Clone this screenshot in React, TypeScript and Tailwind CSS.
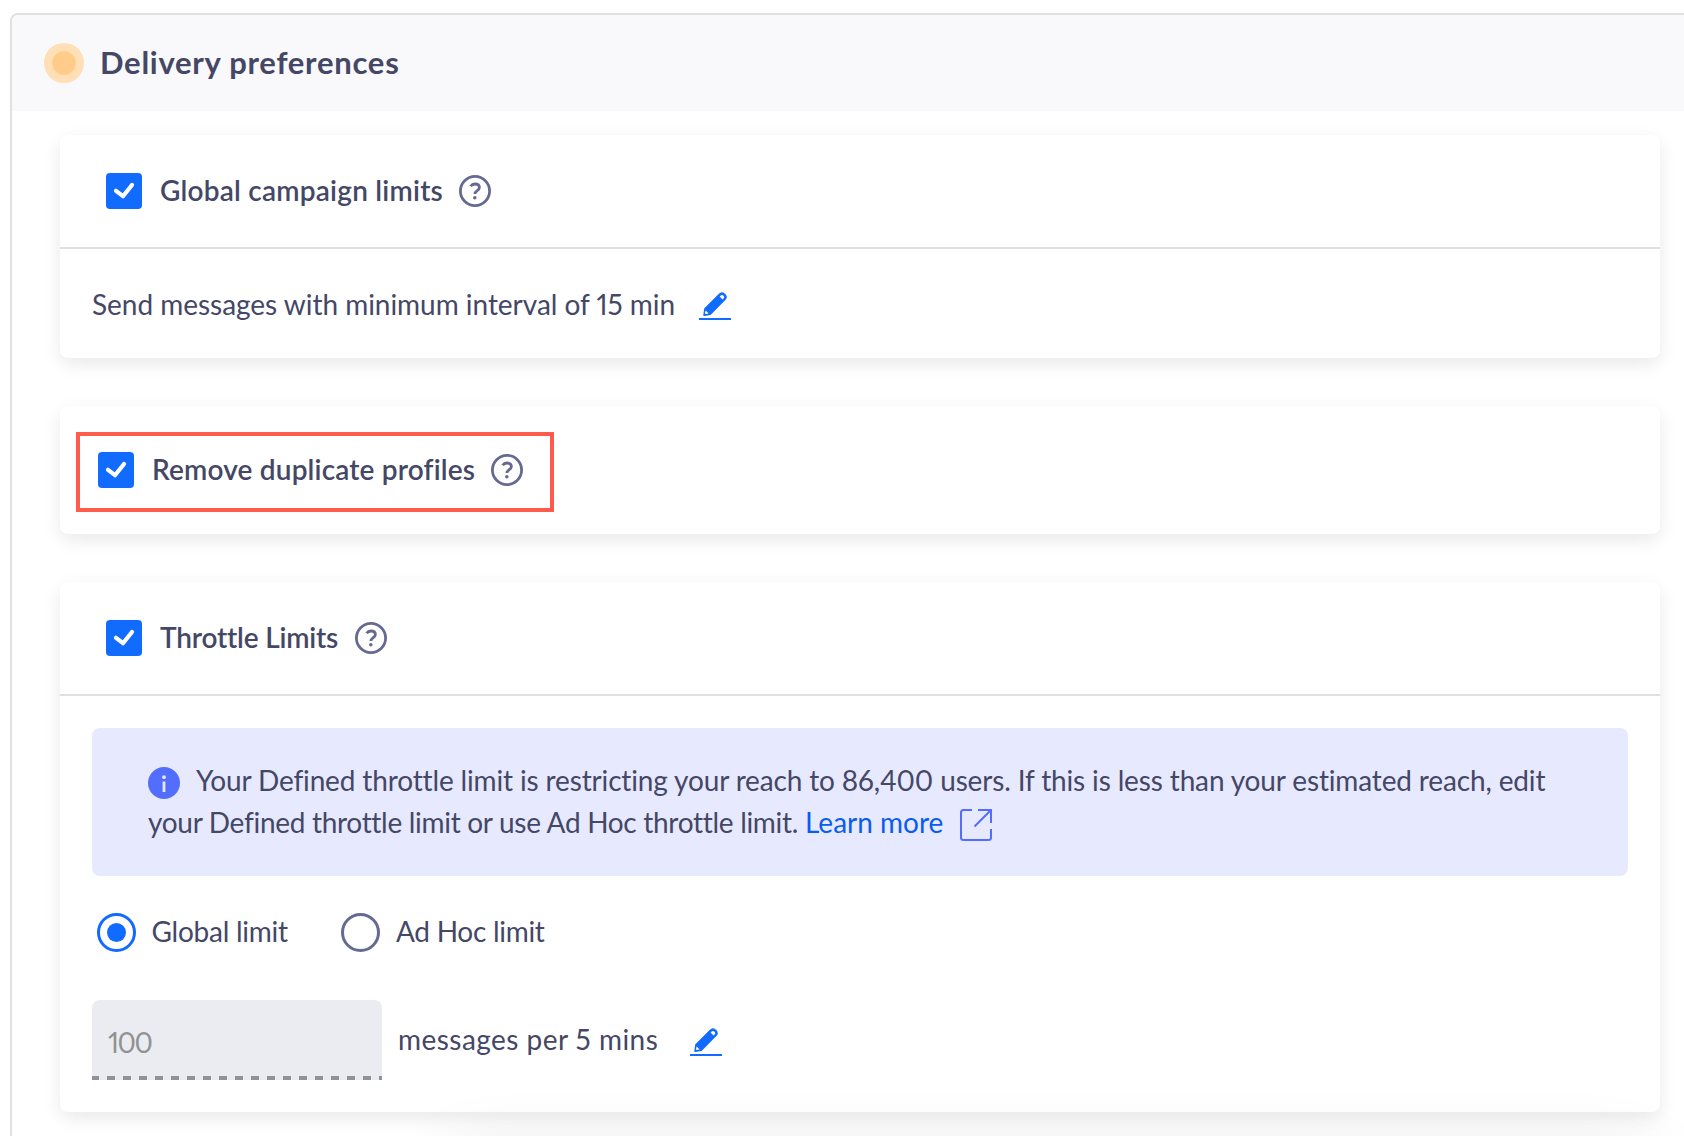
import type { ReactNode } from "react";

function Checkbox() {
  return (
    <span className="flex h-9 w-9 shrink-0 rounded-[4px] bg-[#126bff]">
      <svg viewBox="0 0 36 36" className="h-9 w-9" fill="none" stroke="#fff" strokeWidth="4.2" strokeLinecap="round" strokeLinejoin="round">
        <path d="M10 17.800l7 5.400L26 12" />
      </svg>
    </span>
  );
}

function HelpIcon() {
  return (
    <svg viewBox="0 0 32 32" className="h-8 w-8 shrink-0" fill="none" stroke="#666a92" strokeWidth="2.8">
      <circle cx="16" cy="16" r="14.6" />
      <path d="M11.6 11.2c1-1.400 2.500-2.200 4.400-2.200 2.600 0 4.400 1.400 4.400 3.500 0 3.200-4.500 3.200-4.500 6.600" />
      <circle cx="15.8" cy="22.7" r="1.8" fill="#666a92" stroke="none" />
    </svg>
  );
}

function EditIcon() {
  return (
    <svg viewBox="0 0 32 32" className="h-8 w-8 shrink-0" fill="none">
      <path
        d="M6 20L20.5 5.400c1.400-1.400 3.400-1.400 4.800-.1l.4.4c1.400 1.400 1.400 3.300 0 4.700L11.200 25l-6 1.200z"
        fill="#126bff"
        stroke="#126bff"
        strokeWidth="1.8"
        strokeLinejoin="round"
      />
      <path d="M20.600 7.600l1.200-1.100c.8-.8 1.700-.8 2.400-.1l.5.5c.7.7.7 1.600 0 2.300l-1.200 1.200z" fill="#fff" />
      <path d="M6.600 21.600l3 3-2.900.5-.8-.8z" fill="#fff" />
      <path d="M0 30h32" stroke="#126bff" strokeWidth="2" />
    </svg>
  );
}

function Card({ className, children }: { className: string; children?: ReactNode }) {
  return (
    <section className={`w-[1600px] rounded-lg bg-white shadow-[0_6px_18px_rgba(0,0,0,0.09)] ${className}`}>
      {children}
    </section>
  );
}

export default function App() {
  return (
    <div className="relative h-[1136px] w-[1684px] overflow-hidden bg-white pl-[10px] pt-[13px] font-['Lato','Liberation_Sans',sans-serif] text-[28px] leading-[42px] text-[#444766] [font-variant-ligatures:none] proportional-nums">
      <div className="h-[1200px] w-[1700px] rounded-tl-lg border-2 border-[#e0e0e0]">
        <header className="flex h-24 items-center rounded-tl-md bg-[#f9f9fb] pl-8">
          <span className="flex h-10 w-10 items-center justify-center rounded-full bg-[#ffdfb6]">
            <span className="h-6 w-6 rounded-full bg-[#ffcc8c]" />
          </span>
          <h1 className="-mt-[3px] ml-4 whitespace-nowrap text-[31px] font-bold tracking-[0.73px]">Delivery preferences</h1>
        </header>

        <main className="flex flex-col gap-12 pl-12 pt-6">
          <Card className="h-[223px]">
            <div className="flex h-[114px] items-center border-b-2 border-[#e0e0e0] pl-[46px]">
              <Checkbox />
              <span className="-mt-[2px] ml-[18px] w-[299px] whitespace-nowrap font-semibold tracking-[0.23px]">Global campaign limits</span>
              <HelpIcon />
            </div>
            <div className="flex h-[109px] items-center pl-8">
              <span className="w-[607px] whitespace-nowrap tracking-[-0.03px]">Send messages with minimum interval of 15 min</span>
              <span className="mt-[3px]">
                <EditIcon />
              </span>
            </div>
          </Card>

          <Card className="h-32 pl-4 pt-[26px]">
            <div className="flex h-20 w-[478px] items-center border-4 border-[#ff5b4d] pb-1 pl-[18px]">
              <Checkbox />
              <span className="-mt-[2px] ml-[18px] w-[339px] whitespace-nowrap font-semibold tracking-[0.17px]">Remove duplicate profiles</span>
              <HelpIcon />
            </div>
          </Card>

          <Card className="h-[530px]">
            <div className="flex h-[114px] items-center border-b-2 border-[#e0e0e0] pl-[46px]">
              <Checkbox />
              <span className="-mt-[2px] ml-[18px] w-[194.5px] whitespace-nowrap font-semibold tracking-[-0.18px]">Throttle Limits</span>
              <HelpIcon />
            </div>
            <div className="flex flex-col px-8 pt-8">
              <div className="h-[148px] whitespace-nowrap rounded-lg bg-[#e7e9ff] pl-14 pt-[31px]">
                <div className="flex h-[42px] items-center">
                  <svg viewBox="0 0 32 32" className="mt-[5px] mr-4 h-8 w-8 shrink-0">
                    <circle cx="16" cy="16" r="16" fill="#536dfe" />
                    <circle cx="16" cy="10.2" r="1.9" fill="#e7e9ff" />
                    <path d="M16 14.500v10.500" stroke="#e7e9ff" strokeWidth="2.8" />
                  </svg>
                  <span className="tracking-[-0.145px]">Your Defined throttle limit is restricting your reach to 86,400 users. If this is less than your estimated reach, edit</span>
                </div>
                <div className="flex h-[42px] items-center">
                  <span className="w-[657px] tracking-[-0.3px]">your Defined throttle limit or use Ad Hoc throttle limit.</span>
                  <a className="w-[155px] text-[#0a5cf0]">Learn more</a>
                  <svg viewBox="0 0 32 32" className="mt-[6px] h-8 w-8 shrink-0" fill="none" stroke="#536dfe" strokeWidth="2">
                    <path d="M12 1H3.500Q1 1 1 3.500v25Q1 31 3.500 31h25Q31 31 31 28.500V20" />
                    <path d="M18 1h13v13M31 1L14.500 17.500" />
                  </svg>
                </div>
              </div>

              <div className="mt-9 flex h-10 items-center pl-[4.5px]">
                <span className="flex h-[39px] w-[39px] items-center justify-center rounded-full border-[3px] border-[#126bff]">
                  <span className="h-[19px] w-[19px] rounded-full bg-[#126bff]" />
                </span>
                <span className="-mt-[2px] ml-4 w-[189.5px] tracking-[-0.25px]">Global limit</span>
                <span className="h-[39px] w-[39px] rounded-full border-[3px] border-[#666a92]" />
                <span className="-mt-[2px] ml-4 tracking-[-0.28px]">Ad Hoc limit</span>
              </div>

              <div className="mt-12 flex h-20">
                <div className="flex h-20 w-[290px] flex-col justify-end overflow-hidden rounded-t-lg bg-[#ebecf2]">
                  <span className="mb-[13px] pl-4 tracking-[-1.5px] text-[#929292]">100</span>
                  <div className="-ml-px h-1 shrink-0 bg-[repeating-linear-gradient(90deg,#929296_0_8px,transparent_8px_16px)]" />
                </div>
                <span className="ml-4 mt-[18px] w-[292px] whitespace-nowrap tracking-[0.46px]">messages per 5 mins</span>
                <span className="mt-[25px]">
                  <EditIcon />
                </span>
              </div>
            </div>
          </Card>
        </main>
      </div>
      <div className="pointer-events-none absolute left-[440px] top-[1156px] h-20 w-[1220px] rounded-full shadow-[0_0_70px_rgba(0,0,0,0.12)]" />
    </div>
  );
}
